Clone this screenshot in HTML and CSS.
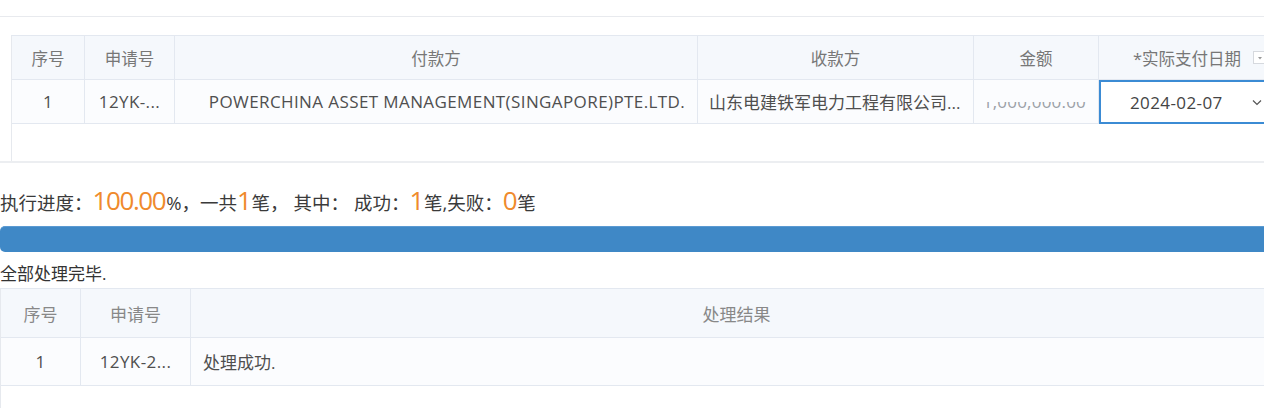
FILE: index.html
```html
<!DOCTYPE html>
<html lang="zh-CN">
<head>
<meta charset="utf-8">
<title>执行进度</title>
<link rel="stylesheet" href="styles.css">
</head>
<body>
<div class="page">
  <div class="top-rule"></div>
  <div class="panel">
    <div class="grid1">
      <div class="row head">
        <div class="c c-no">序号</div>
        <div class="c c-req">申请号</div>
        <div class="c c-payer">付款方</div>
        <div class="c c-payee">收款方</div>
        <div class="c c-amt center">金额</div>
        <div class="c c-date">*实际支付日期<span class="hdr-drop"><svg width="8" height="8" viewBox="0 0 8 8"><path d="M2 3h4L4 5.5z" fill="#999"/></svg></span></div>
      </div>
      <div class="row body">
        <div class="c c-no">1</div>
        <div class="c c-req">12YK-...</div>
        <div class="c c-payer">POWERCHINA ASSET MANAGEMENT(SINGAPORE)PTE.LTD.</div>
        <div class="c c-payee left">山东电建铁军电力工程有限公司...</div>
        <div class="c c-amt"><span class="amt">1,000,000.00</span></div>
        <div class="c c-date edit"><span class="date-val">2024-02-07</span><svg class="chev" width="10" height="7" viewBox="0 0 10 7"><path d="M1 1.5l4 4 4-4" fill="none" stroke="#555" stroke-width="1.2"/></svg></div>
      </div>
    </div>
  </div>
  <div class="progress-text">执行进度：<span class="big">100.00</span>%，一共<span class="big">1</span>笔，<span class="gap">其中：</span><span class="gap">成功：</span><span class="big">1</span>笔,失败：<span class="big">0</span>笔</div>
  <div class="bar"></div>
  <div class="done">全部处理完毕.</div>
  <div class="grid2">
    <div class="row2 head">
      <div class="d d-no">序号</div>
      <div class="d d-req">申请号</div>
      <div class="d d-res center">处理结果</div>
    </div>
    <div class="row2 body">
      <div class="d d-no">1</div>
      <div class="d d-req">12YK-2...</div>
      <div class="d d-res">处理成功.</div>
    </div>
  </div>
</div>
</body>
</html>
```

FILE: styles.css
```css
html, body {
  margin: 0;
  padding: 0;
  background: #fff;
}
body {
  width: 1264px;
  height: 408px;
  overflow: hidden;
  font-family: "Open Sans", "Noto Sans CJK SC", sans-serif;
  font-size: 17px;
  letter-spacing: 0.4px;
  color: #444;
}
.page {
  width: 1264px;
}
.top-rule {
  height: 16px;
  border-bottom: 1px solid #e8eaee;
}
.panel {
  padding: 18px 0 0 11px;
  height: 126px;
  border-bottom: 2px solid #eceef1;
  overflow: hidden;
}
.grid1 {
  width: 1300px;
  height: 130px;
  border-left: 1px solid #e6e9ee;
  border-top: 1px solid #e3e8f0;
}
.row {
  display: flex;
  height: 43px;
  border-bottom: 1px solid #e3e8f0;
}
.row.head {
  background: #f5f8fc;
  color: #777;
  font-size: 16.5px;
  letter-spacing: 0;
}
.row.body {
  background: #fbfcfe;
  color: #4f4f4f;
}
.c {
  display: flex;
  align-items: center;
  justify-content: center;
  border-right: 1px solid #e3e8f0;
  box-sizing: border-box;
  white-space: nowrap;
  overflow: hidden;
}
.c.left { justify-content: flex-start; padding-left: 11px; letter-spacing: 0; }
.c-no { width: 73px; }
.c-req { width: 90px; }
.c-payer { width: 523px; padding-left: 22px; }
.row.head .c-payer { padding-left: 0; }
.c-payee { width: 276px; }
.c-amt { width: 125px; justify-content: flex-end; padding-right: 12px; }
.c-amt.center { justify-content: center; padding-right: 0; }
.c-date { width: 180px; justify-content: flex-start; padding-left: 34px; }
.hdr-drop {
  display: inline-flex;
  align-items: center;
  justify-content: center;
  width: 11px;
  height: 11px;
  border: 1px solid #d6d9de;
  margin-left: 12px;
  background: #fff;
}
.amt {
  color: #9aa0a6;
  clip-path: inset(52% 0 0 0);
  letter-spacing: 0.2px;
}
.c-date.edit {
  border: 2px solid #3b8bd4;
  background: #fff;
  padding-left: 29px;
  height: 44px;
  color: #444;
}
.chev {
  margin-left: 29px;
}
.progress-text {
  margin-top: 24px;
  height: 30px;
  line-height: 30px;
  color: #3a3a3a;
  font-size: 18.5px;
  letter-spacing: 0;
  white-space: nowrap;
}
.gap {
  margin-left: 5px;
}
.big {
  font-size: 26px;
  color: #ef8a2c;
  line-height: 1;
  letter-spacing: -1.4px;
  margin-right: 1px;
}
.bar {
  margin-top: 9px;
  height: 26px;
  width: 1280px;
  background: #3f88c6;
  border-top: 1px solid #5b9ad2;
  border-radius: 5px;
  box-sizing: border-box;
}
.done {
  margin-top: 11px;
  height: 22px;
  line-height: 22px;
  color: #333;
  letter-spacing: 0;
}
.grid2 {
  margin-top: 3px;
  width: 1300px;
  border-top: 1px solid #e3e8f0;
  border-left: 1px solid #e6e9ee;
  height: 140px;
}
.row2 {
  display: flex;
  border-bottom: 1px solid #e3e8f0;
}
.row2.head {
  height: 48px;
  background: #f5f8fc;
  color: #888;
  letter-spacing: 0;
}
.row2.body {
  height: 47px;
  background: #fbfcfe;
  color: #4f4f4f;
}
.d {
  display: flex;
  align-items: center;
  justify-content: center;
  border-right: 1px solid #e3e8f0;
  box-sizing: border-box;
  white-space: nowrap;
}
.d-no { width: 80px; }
.d-req { width: 110px; }
.d-res { flex: 1; justify-content: flex-start; padding-left: 12px; letter-spacing: 0; }
.d-res.center { justify-content: center; padding-left: 0; padding-right: 18px; }
```
